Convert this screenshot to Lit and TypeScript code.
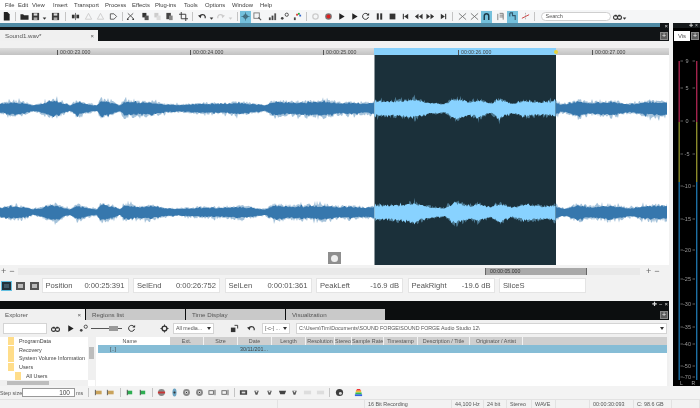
import { LitElement, css, html, svg } from 'lit';
import { customElement } from 'lit/decorators.js';

const MENU = ['File', 'Edit', 'View', 'Insert', 'Transport', 'Process', 'Effects', 'Plug-ins', 'Tools', 'Options', 'Window', 'Help'];
const MENU_X = [5, 18, 32, 53, 74, 105, 132, 155, 184, 205, 232, 260];

// [centre x, icon] pairs, "|" is a separator
const TOOLS: [number, string][] = [
  [6, 'doc'], [15, '|'], [24, 'folder'], [35, 'save'], [44, 'caret'], [55, 'save'], [65, '|'], [75, 'mix'], [88, 'bell'], [100, 'bell'], [113, 'tag'],
  [122, '|'], [130, 'cut'], [145, 'copy'], [157, 'copyoff'], [169, 'paste'], [183, 'crop'], [192, '|'], [202, 'undo'], [211, 'caret'], [220, 'redo'], [230, 'caretoff'],
  [237, '|'], [245, 'target:on'], [257, 'zoom'], [272, 'bars'], [284, 'nodes'], [297, 'colors'], [306, '|'], [315, 'ringoff'], [328, 'rec'], [341, 'play'], [354, 'play'],
  [365, 'loop'], [379, 'pause'], [392, 'stop'], [405, 'prev'], [418, 'rew'], [430, 'ff'], [443, 'next'], [452, '|'], [462, 'cross'], [474, 'cross'], [486, 'magnet:on'],
  [500, 'page'], [512, 'cursor:on'], [525, 'split'], [534, '|'],
];

const STEP_TOOLS: [number, string][] = [
  [88, '|'], [98, 'ormark'], [110, 'ormark'], [120, '|'], [129, 'grflag'], [142, 'grflag'], [152, '|'], [161, 'redeye'], [174, 'tall'], [186, 'eye'], [199, 'eye'], [212, 'sq'], [225, 'sq'],
  [234, '|'], [243, 'film'], [256, 'drop'], [269, 'drop'], [282, 'film2'], [294, 'drop'], [307, 'dim'], [320, 'dim'], [329, '|'], [339, 'globe'], [358, 'rainbow'],
];

const ICONS: Record<string, unknown> = {
  doc: svg`<path d="M2 0h4l2.500 2.500V9.500H2z" fill="#222"/>`,
  folder: svg`<path d="M.5 2.500h3l1 1h5v5H.5z" fill="#2a2a2a"/>`,
  save: svg`<path d="M1 1h8v8H1z" fill="#3a3a3a"/><rect x="3" y="1.500" width="4" height="2.500" fill="#ddd"/><rect x="3" y="6" width="4" height="3" fill="#aaa"/>`,
  caret: svg`<path d="M3 6h4L5 8.500z" fill="#333"/>`,
  caretoff: svg`<path d="M3 6h4L5 8.500z" fill="#ccc"/>`,
  mix: svg`<rect x="1" y="3" width="3" height="4" fill="#333"/><rect x="6" y="3" width="3" height="4" fill="#333"/><rect x="4.500" y="1" width="1" height="8" fill="#666"/>`,
  bell: svg`<path d="M5 1.500 8.500 8h-7z" fill="none" stroke="#ccc"/>`,
  tag: svg`<path d="M1.500 2h4l3 3-3 3h-4z" fill="none" stroke="#555"/>`,
  cut: svg`<path d="M2 1.500 8 7M8 1.500 2 7" stroke="#555" fill="none"/><circle cx="2" cy="8" r="1" fill="#333"/><circle cx="8" cy="8" r="1" fill="#333"/>`,
  copy: svg`<rect x="1.500" y="1" width="4.500" height="5" fill="#333"/><rect x="4" y="4" width="4.500" height="5" fill="#555"/>`,
  copyoff: svg`<rect x="1.500" y="1" width="4.500" height="5" fill="#ccc"/><rect x="4" y="4" width="4.500" height="5" fill="#ddd"/>`,
  paste: svg`<rect x="1.500" y="1" width="5" height="7" fill="#444"/><rect x="4.500" y="4" width="4" height="5" fill="#888"/>`,
  crop: svg`<path d="M2.500 0v7.500H10M0 2.500h7.500V10" fill="none" stroke="#333"/>`,
  undo: svg`<path d="M2 5a3.200 3.200 0 0 1 6 0v2" fill="none" stroke="#333" stroke-width="1.300"/><path d="M0 4l4-1-1 4z" fill="#333"/>`,
  redo: svg`<path d="M8 5a3.200 3.200 0 0 0-6 0v2" fill="none" stroke="#ccc" stroke-width="1.300"/><path d="M10 4 6 3l1 4z" fill="#ccc"/>`,
  target: svg`<circle cx="5" cy="5" r="2.600" fill="#3b6678"/><circle cx="5" cy="5" r="1" fill="#bfe4f0"/><path d="M5 .500v9M.500 5h9" stroke="#3b6678" stroke-width=".8"/>`,
  zoom: svg`<rect x="1" y="1" width="6" height="6" fill="none" stroke="#777"/><path d="M6 6l3 3" stroke="#555" stroke-width="1.300"/>`,
  bars: svg`<rect x="1" y="6" width="2" height="3" fill="#444"/><rect x="4" y="4" width="2" height="5" fill="#444"/><rect x="7" y="1.500" width="2" height="7.500" fill="#555"/>`,
  nodes: svg`<circle cx="2.500" cy="7" r="1.500" fill="#444"/><circle cx="7.500" cy="3" r="1.800" fill="none" stroke="#444"/>`,
  colors: svg`<rect x="1" y="6" width="2" height="3" fill="#444"/><rect x="3.500" y="2" width="2" height="2" fill="#d33"/><rect x="5.500" y="1" width="2" height="2" fill="#2a3"/><rect x="7" y="3" width="2" height="2" fill="#36c"/>`,
  ringoff: svg`<circle cx="5" cy="5" r="3" fill="none" stroke="#ccc" stroke-width="1.400"/>`,
  rec: svg`<circle cx="5" cy="5" r="3.700" fill="#777"/><circle cx="5" cy="5" r="2.300" fill="#d22"/>`,
  play: svg`<path d="M2.500 1.500 8.500 5l-6 3.500z" fill="#222"/>`,
  loop: svg`<path d="M7.800 3A3.300 3.300 0 1 0 8.300 5.500" fill="none" stroke="#333" stroke-width="1.100"/><path d="M9 1v3H6z" fill="#333"/>`,
  pause: svg`<rect x="2" y="1.500" width="2.200" height="7" fill="#333"/><rect x="5.800" y="1.500" width="2.200" height="7" fill="#333"/>`,
  stop: svg`<rect x="1.800" y="1.800" width="6.400" height="6.400" fill="#333"/>`,
  prev: svg`<rect x="2" y="2" width="1.200" height="6" fill="#333"/><path d="M8 2v6L3.500 5z" fill="#333"/>`,
  rew: svg`<path d="M5 2v6L1 5zM9.500 2v6l-4-3z" fill="#333"/>`,
  ff: svg`<path d="M.500 2v6l4-3zM5 2v6l4-3z" fill="#333"/>`,
  next: svg`<rect x="6.800" y="2" width="1.200" height="6" fill="#333"/><path d="M2 2v6l4.500-3z" fill="#333"/>`,
  cross: svg`<path d="M1 1.500C4 4 6 6 9 8.500M9 1.500C6 4 4 6 1 8.500" fill="none" stroke="#555" stroke-width=".8"/>`,
  magnet: svg`<path d="M2.500 9V4.500a2.500 2.500 0 0 1 5 0V9" fill="none" stroke="#1d3b4a" stroke-width="1.600"/>`,
  page: svg`<path d="M2 2v7M4 1.500h4v7M4 3.500h4M4 5.500h4" fill="none" stroke="#777"/>`,
  cursor: svg`<path d="M2 1h3v3h3v5M2 1v4" fill="none" stroke="#33566a" stroke-width="1.200"/>`,
  split: svg`<path d="M1 7 9 3" stroke="#c33"/><path d="M5 1v8" stroke="#999" stroke-dasharray="1 1"/>`,
  ormark: svg`<rect x="1.500" y="3" width="7" height="4" fill="#c9a35c"/><rect x="1" y="2" width="1" height="6" fill="#555"/>`,
  grflag: svg`<rect x="2.500" y="3" width="5.500" height="4" fill="#2fae52"/><rect x="2" y="2" width="1" height="6" fill="#444"/>`,
  redeye: svg`<circle cx="5" cy="5" r="3.800" fill="#888"/><rect x="1" y="4" width="8" height="2" fill="#c33"/>`,
  tall: svg`<ellipse cx="5" cy="5" rx="2.300" ry="4.500" fill="#6aa3c2"/><circle cx="5" cy="5" r="1.200" fill="#333"/>`,
  eye: svg`<circle cx="5" cy="5" r="3.800" fill="#888"/><circle cx="5" cy="5" r="1.600" fill="#eee"/><circle cx="5" cy="5" r=".8" fill="#333"/>`,
  sq: svg`<rect x="1" y="3" width="5" height="4" fill="none" stroke="#666"/><rect x="7" y="2" width="1.500" height="6" fill="#888"/>`,
  film: svg`<rect x="1" y="2.500" width="8" height="5" fill="#444"/><rect x="3" y="4" width="4" height="2" fill="#ddd"/>`,
  film2: svg`<path d="M1 3h8l-1.500 4h-5z" fill="#444"/>`,
  drop: svg`<path d="M2.500 3h5L6 7.500H4z" fill="#555"/><circle cx="5" cy="4" r="1" fill="#eee"/>`,
  dim: svg`<rect x="1" y="3" width="8" height="4" fill="#ddd"/>`,
  globe: svg`<circle cx="5" cy="5" r="4" fill="#3d3d3d"/><circle cx="6" cy="6" r="1.600" fill="#ddd"/>`,
  rainbow: svg`<path d="M3.500 1h3L8 3H2z" fill="#e33"/><path d="M2 3h6v2H2z" fill="#eb3"/><path d="M1.500 5h7v2h-7z" fill="#3b5"/><path d="M1 7h8v2H1z" fill="#36d"/>`,
  binoc: svg`<circle cx="2.800" cy="6" r="2.200" fill="none" stroke="#333" stroke-width="1.200"/><circle cx="7.200" cy="6" r="2.200" fill="none" stroke="#333" stroke-width="1.200"/><path d="M2 3h2v2H2zM6 3h2v2H6z" fill="#333"/>`,
  gear: svg`<circle cx="5" cy="5" r="2.700" fill="none" stroke="#333" stroke-width="1.500"/><path d="M5 .500v2M5 7.500v2M.500 5h2M7.500 5h2" stroke="#333"/>`,
  stack: svg`<rect x="1" y="4" width="5" height="5" fill="#333"/><path d="M5 1.500h3.500V5" fill="none" stroke="#333"/>`,
};

const icon = (name: string) => html`<svg class="ic" viewBox="0 0 10 10">${ICONS[name]}</svg>`;

// lays children out left to right so that each one starts at a given x
const strip = (items: [number, unknown][]) => {
  const out: unknown[] = [html`<span class="slot" style="width:${items[0][0]}px"></span>`];
  items.forEach(([x, item], i) => {
    const w = i + 1 < items.length ? items[i + 1][0] - x : null;
    out.push(html`<span class="slot" style=${w === null ? '' : `width:${w}px`}>${item}</span>`);
  });
  return out;
};

const toolItem = ([cx, raw]: [number, string]): [number, unknown] => {
  if (raw === '|') return [cx, html`<i class="sep"></i>`];
  const [name, on] = raw.split(':');
  return [cx - 5.5, html`<span class="btn ${on ? 'on' : ''}">${icon(name)}</span>`];
};

// envelope of the clip: [x, half height in px]
const ENV: [number, number][] = [
  [0, 6], [15, 9], [25, 7], [33, 3], [40, 5], [53, 12], [62, 7], [70, 3], [77, 10], [88, 5], [97, 3], [101, 12], [112, 8], [120, 3], [124, 10], [140, 8], [150, 9],
  [165, 5], [180, 4], [200, 6], [225, 6], [240, 8], [255, 5], [265, 3], [274, 10], [290, 8], [310, 9], [325, 10], [340, 7], [350, 8], [365, 6], [374, 8],
  [385, 8], [400, 9], [415, 11], [430, 6], [445, 4], [455, 13], [470, 7], [478, 11], [490, 5], [500, 11], [512, 5], [525, 9], [545, 7], [556, 9],
  [560, 5], [566, 5], [578, 11], [590, 7], [610, 10], [618, 8], [630, 5], [652, 10], [669, 9],
];

const envAt = (x: number) => {
  for (let i = 1; i < ENV.length; i++) {
    if (x <= ENV[i][0]) {
      const [x0, a0] = ENV[i - 1];
      const [x1, a1] = ENV[i];
      return a0 + ((a1 - a0) * (x - x0)) / (x1 - x0);
    }
  }
  return 8;
};

const rng = (seed: number) => () => {
  seed = (seed * 1664525 + 1013904223) % 4294967296;
  return seed / 4294967296;
};

const wavePath = (from: number, to: number, cy: number, seed: number, scale: number, jitter: number) => {
  const r = rng(seed);
  const top: string[] = [];
  const bottom: string[] = [];
  for (let x = from; x <= to; x += 1) {
    const a = envAt(x) * scale;
    const spikeUp = r() < 0.07 ? a * 0.3 : 0;
    const spikeDown = r() < 0.07 ? a * 0.3 : 0;
    const up = a * (1 - jitter + jitter * r()) * 0.88 + 1 + spikeUp;
    const down = a * (1 - jitter + jitter * r()) * 1.08 + 1 + spikeDown;
    top.push(`${x.toFixed(2)} ${(cy - up).toFixed(1)}`);
    bottom.unshift(`${x.toFixed(2)} ${(cy + down).toFixed(1)}`);
  }
  return `M${top.join('L')}L${bottom.join('L')}Z`;
};

const SPANS: [number, number, string][] = [
  [0, 374.5, '#3677ad'],
  [374.5, 556, '#88d2ff'],
  [556, 667, '#3677ad'],
];

const WAVE = SPANS.flatMap(([from, to, color], i) =>
  [53, 157].flatMap((cy, c) => [
    { d: wavePath(from, to, cy, 11 + i * 7 + c * 3, i === 1 ? 1.05 : 0.95, 0.5), color, op: 0.45 },
    { d: wavePath(from, to, cy, 29 + i * 5 + c * 9, i === 1 ? 0.82 : 0.66, 0.3), color, op: 1 },
  ]),
);

const RULER = [
  { x: 57, t: '00:00:23.000' },
  { x: 190, t: '00:00:24.000' },
  { x: 323, t: '00:00:25.000' },
  { x: 458, t: '00:00:26.000' },
  { x: 592, t: '00:00:27.000' },
];

const FIELDS = [
  ['Position', '0:00:25:391'],
  ['SelEnd', '0:00:26:752'],
  ['SelLen', '0:00:01:361'],
  ['PeakLeft', '-16.9 dB'],
  ['PeakRight', '-19.6 dB'],
  ['SliceS', ''],
];

const TABS = ['Regions list', 'Time Display', 'Visualization'];

const TREE = [
  { t: 'ProgramData', sub: false },
  { t: 'Recovery', sub: false },
  { t: 'System Volume Information', sub: false },
  { t: 'Users', sub: false },
  { t: 'All Users', sub: true },
];

const COLS: [string, number][] = [
  ['Ext.', 34], ['Size', 34], ['Date', 34], ['Length', 34], ['Resolution', 29], ['Stereo', 17], ['Sample Rate', 32], ['Timestamp', 34], ['Description / Title', 52], ['Originator / Artist', 53],
];

const STATUS: [string, number][] = [
  ['', 278], ['', 87], ['16 Bit Recording', 87], ['44,100 Hz', 32], ['24 bit', 23], ['Stereo', 25], ['WAVE', 24], ['', 34], ['00:00:30:093', 44], ['C: 98.6 GB', 38], ['', 28],
];

const SCALE: [string, number][] = [
  ['9', 61], ['5', 88], ['0', 121], ['-5', 154], ['-10', 186], ['-15', 219], ['-20', 250], ['-25', 279], ['-30', 304], ['-35', 327], ['-40', 344], ['-50', 366], ['-70', 377],
];

@customElement('app-root')
export class AppRoot extends LitElement {
  static styles = css`
    :host {
      display: block;
      width: 700px;
      height: 408px;
      overflow: hidden;
      font-family: 'Liberation Sans', Arial, sans-serif;
      color: #444;
    }
    .app {
      width: 700px;
      height: 408px;
      display: flex;
      flex-direction: column;
      background: #f2f2f2;
      filter: blur(0.35px);
    }
    .ic {
      width: 9px;
      height: 9px;
      display: block;
    }
    .strip {
      display: flex;
      align-items: center;
    }
    .slot {
      flex: none;
      display: flex;
      align-items: center;
      white-space: nowrap;
    }
    .sep {
      width: 1px;
      height: 9px;
      background: #c4c4c4;
      display: block;
    }
    .btn {
      width: 11px;
      height: 12px;
      flex: none;
      display: flex;
      align-items: center;
      justify-content: center;
    }
    .btn.on {
      background: #74c0dc;
    }
    .menu {
      height: 10px;
      flex: none;
      background: #fff;
      font-size: 5.900px;
      color: #3c3c3c;
    }
    .toolbar {
      height: 13px;
      flex: none;
      background: #f5f6f7;
    }
    .search {
      width: 70px;
      height: 9px;
      box-sizing: border-box;
      margin-left: 6px;
      padding-left: 4px;
      border: 1px solid #cfcfcf;
      border-radius: 5px;
      background: #fff;
      font-size: 5.500px;
      line-height: 7px;
      color: #555;
    }
    .main {
      height: 363px;
      flex: none;
      display: flex;
      gap: 4px;
    }
    .left {
      width: 669px;
      display: flex;
      flex-direction: column;
    }
    .dochead {
      height: 18px;
      flex: none;
      background: #111416;
      position: relative;
    }
    .title {
      height: 4px;
      margin-right: 9px;
      background: #4f8aa4;
    }
    .tabline {
      display: flex;
      justify-content: space-between;
      align-items: flex-end;
      height: 14px;
    }
    .doctab {
      width: 98px;
      height: 11px;
      box-sizing: border-box;
      padding: 0 4px 0 5px;
      display: flex;
      justify-content: space-between;
      align-items: center;
      background: #f0f0f0;
      font-size: 6.200px;
      color: #555;
    }
    .close {
      font-size: 6px;
      color: #555;
    }
    .square {
      width: 8px;
      height: 8px;
      flex: none;
      margin: 0 1px 1px 0;
      box-sizing: border-box;
      border: 1px solid #888;
      background: #5d5d5d;
      color: #eee;
      font-size: 7px;
      line-height: 6px;
      text-align: center;
    }
    .mini {
      position: absolute;
      top: 0;
      right: 1px;
      color: #ddd;
      font-size: 6px;
      line-height: 6px;
      display: flex;
      gap: 2px;
    }
    .ruler-gap {
      height: 7px;
      flex: none;
      background: #f1f1f1;
    }
    .ruler {
      height: 7px;
      flex: none;
      position: relative;
      background: linear-gradient(#dcdcdc, #c2c2c2);
      font-size: 5.200px;
      line-height: 7px;
      color: #444;
    }
    .ruler-sel {
      position: absolute;
      top: 0;
      bottom: 0;
      left: 374px;
      width: 182px;
      background: #87d0fb;
    }
    .ruler-mark {
      position: absolute;
      top: 0;
      white-space: nowrap;
      padding-left: 2px;
      border-left: 1px solid #555;
      height: 5px;
      margin-top: 2px;
      line-height: 5px;
    }
    .ruler-pin {
      position: absolute;
      top: 2px;
      left: 554px;
      width: 4px;
      height: 4px;
      border-radius: 50%;
      background: #e6d43a;
    }
    .wave {
      height: 210px;
      flex: none;
      position: relative;
      background: #fff;
    }
    .wave svg {
      display: block;
    }
    .rec-dot {
      position: absolute;
      left: 328px;
      top: 197px;
      width: 13px;
      height: 12px;
      background: #8e8e8e;
      display: flex;
      align-items: center;
      justify-content: center;
    }
    .rec-dot i {
      width: 7px;
      height: 7px;
      border-radius: 50%;
      background: #eee;
    }
    .scroll {
      height: 12px;
      flex: none;
      display: flex;
      align-items: center;
      font-size: 9px;
      color: #666;
    }
    .pm {
      width: 18px;
      flex: none;
      display: flex;
      gap: 3px;
      padding-left: 1px;
      box-sizing: border-box;
      line-height: 9px;
    }
    .track {
      width: 622px;
      height: 7px;
      flex: none;
      margin-right: 5px;
      display: flex;
      background: #e9e9e9;
    }
    .thumb {
      width: 102px;
      margin-left: 467px;
      box-sizing: border-box;
      padding-left: 4px;
      border-left: 1px solid #666;
      border-right: 1px solid #666;
      background: #a9a9a9;
      font-size: 5.200px;
      line-height: 7px;
      color: #333;
    }
    .fields {
      height: 24px;
      flex: none;
      display: flex;
      gap: 4.500px;
      padding: 1px 0 0 2px;
      box-sizing: border-box;
    }
    .views {
      display: flex;
      width: 35px;
      height: 15px;
      flex: none;
      align-items: center;
      gap: 5px;
    }
    .view {
      width: 9px;
      height: 8px;
      flex: none;
      box-sizing: border-box;
      border: 2px solid #555;
      background: #bbb;
    }
    .view.on {
      border-color: #21323c;
      outline: 1.500px solid #63bfe0;
      background: #3f5a68;
    }
    .field {
      width: 87px;
      height: 15px;
      flex: none;
      box-sizing: border-box;
      border: 1px solid #e4e4e4;
      background: #fff;
      padding: 0 3px;
      display: flex;
      align-items: center;
      justify-content: space-between;
      font-size: 7.600px;
      color: #555;
    }
    .dock {
      height: 19px;
      flex: none;
      background: #0c0e0f;
      position: relative;
      display: flex;
      align-items: flex-end;
      justify-content: space-between;
    }
    .tabs {
      display: flex;
      gap: 1px;
    }
    .tab {
      width: 99px;
      height: 11px;
      box-sizing: border-box;
      padding-left: 6px;
      background: #c9c9c9;
      font-size: 6.200px;
      line-height: 11px;
      color: #555;
    }
    .tab.first {
      width: 85px;
      padding: 0 4px 0 5px;
      background: #f0f0f0;
      display: flex;
      justify-content: space-between;
    }
    .explorer {
      flex: 1;
      display: flex;
      flex-direction: column;
      background: #f0f0f0;
    }
    .ex-tools {
      height: 16px;
      flex: none;
      font-size: 5.300px;
      color: #555;
    }
    .box {
      box-sizing: border-box;
      height: 11px;
      border: 1px solid #d4d4d4;
      background: #fff;
      display: flex;
      align-items: center;
      justify-content: space-between;
      padding: 0 2px;
      white-space: nowrap;
    }
    .slider {
      width: 31px;
      height: 1px;
      background: #555;
      position: relative;
      display: block;
    }
    .slider i {
      position: absolute;
      left: 18px;
      top: -2px;
      width: 9px;
      height: 5px;
      background: #999;
    }
    .arrow {
      width: 0;
      height: 0;
      border-left: 2px solid transparent;
      border-right: 2px solid transparent;
      border-top: 3px solid #333;
    }
    .ex-body {
      flex: 1;
      display: flex;
      gap: 1px;
      font-size: 5.400px;
      color: #444;
    }
    .tree {
      width: 95px;
      flex: none;
      display: grid;
      grid-template-columns: 1fr 7px;
      grid-template-rows: 1fr 6px;
      margin-top: 1px;
      background: #fff;
    }
    .items {
      padding: 0 0 0 8px;
      display: flex;
      flex-direction: column;
      justify-content: space-around;
      white-space: nowrap;
      overflow: hidden;
    }
    .item {
      display: flex;
      align-items: center;
      gap: 5px;
      height: 8.300px;
    }
    .item.sub {
      padding-left: 7px;
      gap: 5px;
    }
    .item i {
      width: 6px;
      height: 8px;
      flex: none;
      background: #ffdd8a;
    }
    .vbar {
      background: #f0f0f0;
      display: flex;
      justify-content: center;
    }
    .vbar i {
      width: 5px;
      height: 12px;
      margin-top: 10px;
      background: #bdbdbd;
    }
    .hbar {
      background: #f0f0f0;
      grid-column: 1;
    }
    .hbar i {
      display: block;
      width: 42px;
      height: 4px;
      margin: 1px 0 0 7px;
      background: #bdbdbd;
    }
    .list {
      flex: 1;
      margin: 1px 2px 0 0;
      background: #fff;
      display: flex;
      flex-direction: column;
    }
    .head {
      height: 8px;
      flex: none;
      display: flex;
      background: #cfcfcf;
      text-align: center;
      line-height: 8px;
      color: #555;
    }
    .col-name {
      width: 74px;
      flex: none;
      background: #fff;
      box-sizing: border-box;
      padding-right: 33px;
      text-align: right;
    }
    .col {
      flex: none;
      box-sizing: border-box;
      border-right: 1px solid #f2f2f2;
      white-space: nowrap;
      overflow: hidden;
    }
    .sel {
      height: 8px;
      flex: none;
      margin-left: 2px;
      display: flex;
      background: #86bdd6;
      line-height: 8px;
      color: #444;
    }
    .sel .up {
      width: 142px;
      flex: none;
      padding-left: 12px;
      box-sizing: border-box;
    }
    .meter {
      width: 27px;
      flex: none;
      background: #000;
      display: flex;
      flex-direction: column;
      position: relative;
    }
    .meter-top {
      height: 5px;
      flex: none;
      background: #15191b;
      color: #ccc;
      font-size: 5px;
      line-height: 5px;
      display: flex;
      justify-content: flex-end;
      gap: 2px;
      padding-right: 2px;
    }
    .meter-tab {
      height: 13px;
      flex: none;
      display: flex;
      align-items: flex-end;
      gap: 1px;
      padding-left: 1px;
    }
    .meter-tab span {
      width: 16px;
      height: 10px;
      background: #fff;
      font-size: 6px;
      line-height: 10px;
      text-align: center;
      color: #555;
    }
    .meter-tab .square {
      margin: 0 0 1px 0;
    }
    .meter svg {
      display: block;
      font-family: 'Liberation Sans', Arial, sans-serif;
    }
    .stepbar {
      height: 13px;
      flex: none;
      font-size: 5.400px;
      color: #555;
      background: #f3f3f3;
    }
    .step {
      width: 53px;
      height: 9px;
      box-sizing: border-box;
      border: 1px solid #999;
      background: #fff;
      text-align: right;
      padding-right: 4px;
      font-size: 6.500px;
      line-height: 7px;
      color: #444;
    }
    .status {
      height: 9px;
      flex: none;
      display: flex;
      border-top: 1px solid #e2e2e2;
      box-sizing: border-box;
      font-size: 5.400px;
      line-height: 8px;
      color: #555;
    }
    .status span {
      flex: none;
      box-sizing: border-box;
      padding-left: 3px;
      border-right: 1px solid #e2e2e2;
      white-space: nowrap;
    }
  `;

  private renderWave() {
    return html`<svg width="669" height="210" viewBox="0 0 669 210">
      <rect x="374.500" y="0" width="181.500" height="210" fill="#1b303a" />
      ${WAVE.map((w) => svg`<path d=${w.d} fill=${w.color} opacity=${w.op} />`)}
    </svg>`;
  }

  private renderMeter() {
    // scale values keep their screen y, the drawing starts at y 41
    const y = (v: number) => v - 41;
    const ticks = SCALE.map(([t, at]) => svg`
      <path d="M7.500 ${y(at)}h2.500M19.500 ${y(at)}h2.500" stroke="#888" stroke-width=".7" />
      <text x="14" y=${y(at) + 2} text-anchor="middle" font-size="5.500" fill="#9a9a9a">${t}</text>`);
    const bar = (x: number) => svg`
      <rect x=${x} y=${y(61)} width="1.400" height="61" fill="#a3234c" />
      <rect x=${x} y=${y(122)} width="1.400" height="60" fill="#8a8a2b" />
      <rect x=${x} y=${y(182)} width="1.400" height="198" fill="#1c6fa3" />`;
    return html`<svg width="27" height="345" viewBox="0 0 27 345">
      ${bar(5.500)}${bar(23)}${ticks}
      <text x="7" y="344" font-size="5" fill="#aaa">L</text>
      <text x="18.500" y="344" font-size="5" fill="#aaa">R</text>
    </svg>`;
  }

  render() {
    return html`
      <div class="app">
        <div class="menu strip">
          ${strip(MENU.map((m, i) => [MENU_X[i], m] as [number, unknown]))}
        </div>
        <div class="toolbar strip">
          ${strip([
            ...TOOLS.map(toolItem),
            [534.5, html`<span class="search">Search</span>`],
            [612, html`<span class="btn">${icon('binoc')}</span>`],
            [619, html`<span class="btn">${icon('caret')}</span>`],
          ])}
        </div>
        <div class="main">
          <div class="left">
            <div class="dochead">
              <div class="title"></div>
              <div class="tabline">
                <div class="doctab"><span>Sound1.wav*</span><span class="close">×</span></div>
                <div class="square">+</div>
              </div>
              <div class="mini"><span>×</span></div>
            </div>
            <div class="ruler-gap"></div>
            <div class="ruler">
              <div class="ruler-sel"></div>
              ${RULER.map((r) => html`<span class="ruler-mark" style="left:${r.x}px">${r.t}</span>`)}
              <div class="ruler-pin"></div>
            </div>
            <div class="wave">
              ${this.renderWave()}
              <div class="rec-dot"><i></i></div>
            </div>
            <div class="scroll">
              <div class="pm"><span>+</span><span>−</span></div>
              <div class="track"><div class="thumb">00:00:05.000</div></div>
              <div class="pm"><span>+</span><span>−</span></div>
            </div>
            <div class="fields">
              <div class="views">
                <i class="view on"></i><i class="view"></i><i class="view"></i>
              </div>
              ${FIELDS.map(([k, v]) => html`<div class="field"><span>${k}</span><span>${v}</span></div>`)}
            </div>
            <div class="dock">
              <div class="tabs">
                <div class="tab first"><span>Explorer</span><span>×</span></div>
                ${TABS.map((t) => html`<div class="tab">${t}</div>`)}
              </div>
              <div class="square">+</div>
              <div class="mini"><span>✚</span><span>−</span><span>×</span></div>
            </div>
            <div class="explorer">
              <div class="ex-tools strip">
                ${strip([
                  [3, html`<span class="box" style="width:44px"></span>`],
                  [49.5, html`<span class="btn">${icon('binoc')}</span>`],
                  [64.5, html`<span class="btn">${icon('play')}</span>`],
                  [77.5, html`<span class="btn">${icon('nodes')}</span>`],
                  [91, html`<i class="slider"><i></i></i>`],
                  [125.5, html`<span class="btn">${icon('loop')}</span>`],
                  [158.5, html`<span class="btn">${icon('gear')}</span>`],
                  [173, html`<span class="box" style="width:41px">All media...<i class="arrow"></i></span>`],
                  [228.5, html`<span class="btn">${icon('stack')}</span>`],
                  [245.5, html`<span class="btn">${icon('undo')}</span>`],
                  [262, html`<span class="box" style="width:28px">[-c-] ...<i class="arrow"></i></span>`],
                  [296, html`<span class="box" style="width:371px">C:\\Users\\Tim\\Documents\\SOUND FORGE\\SOUND FORGE Audio Studio 12\\<i class="arrow"></i></span>`],
                ])}
              </div>
              <div class="ex-body">
                <div class="tree">
                  <div class="items">
                    ${TREE.map((n) => html`<div class="item ${n.sub ? 'sub' : ''}"><i></i><span>${n.t}</span></div>`)}
                  </div>
                  <div class="vbar"><i></i></div>
                  <div class="hbar"><i></i></div>
                </div>
                <div class="list">
                  <div class="head">
                    <div class="col-name">Name</div>
                    ${COLS.map(([c, w]) => html`<div class="col" style="width:${w}px">${c}</div>`)}
                  </div>
                  <div class="sel">
                    <div class="up">[..]</div>
                    <div>30/11/201...</div>
                  </div>
                </div>
              </div>
            </div>
          </div>
          <div class="meter">
            <div class="meter-top"><span>✚</span><span>×</span></div>
            <div class="meter-tab"><span>Vis</span><div class="square">+</div></div>
            ${this.renderMeter()}
          </div>
        </div>
        <div class="stepbar strip">
          ${strip([
            [0, 'Step size'],
            [22, html`<span class="step">100</span>`],
            [76, 'ms'],
            ...STEP_TOOLS.map(toolItem),
          ])}
        </div>
        <div class="status">
          ${STATUS.map(([t, w]) => html`<span style="width:${w}px">${t}</span>`)}
        </div>
      </div>
    `;
  }
}
